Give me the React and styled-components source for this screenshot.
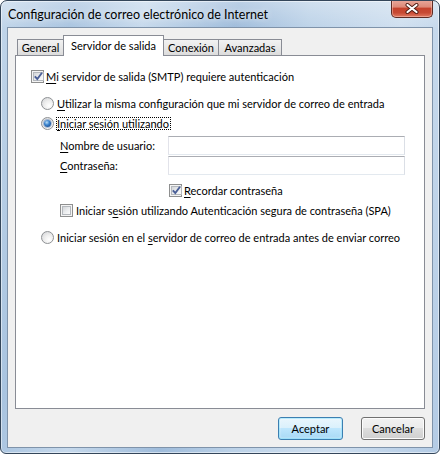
import React from 'react'
import styled, { createGlobalStyle, css } from 'styled-components'

const GlobalStyle = createGlobalStyle`
  html, body {
    margin: 0;
    padding: 0;
    background: #ffffff;
  }
  body {
    font-family: Lato, "Liberation Sans", sans-serif;
    color: #000;
  }
`

const UI_FONT = `font-family: Lato, "Liberation Sans", sans-serif; font-size: 11px;`

const Window = styled.div`
  box-sizing: border-box;
  width: 440px;
  height: 454px;
  display: flex;
  flex-direction: column;
  border: 1px solid #34465a;
  border-radius: 7px 7px 6px 6px;
  overflow: hidden;
  background:
    linear-gradient(180deg, rgba(255, 255, 255, 0.3), rgba(255, 255, 255, 0) 28px),
    linear-gradient(
      100deg,
      #c2d6ea 0%,
      #a9c4e0 14%,
      #c6d9ec 28%,
      #9fbcdb 46%,
      #bcd2e8 60%,
      #cfdfef 78%,
      #b3cbe5 100%
    );
  box-shadow: inset 0 0 0 1px rgba(255, 255, 255, 0.5);
`

const TitleBar = styled.div`
  flex: none;
  height: 26px;
  display: flex;
  align-items: center;
  padding-left: 7px;
`

const Title = styled.span`
  font-family: Lato, "Liberation Sans", sans-serif;
  font-size: 12.5px;
  color: #000;
  text-shadow: 0 0 6px rgba(255, 255, 255, 0.9);
`

const CloseButton = styled.div`
  box-sizing: border-box;
  align-self: flex-start;
  margin: -1px 6px 0 auto;
  width: 42px;
  height: 18px;
  display: flex;
  align-items: center;
  justify-content: center;
  border: 1px solid #5d2b24;
  border-top: none;
  border-radius: 0 0 5px 5px;
  background: linear-gradient(
    180deg,
    #e9a99c 0%,
    #de8a79 40%,
    #c5432d 50%,
    #c74a34 75%,
    #e07a62 100%
  );
  box-shadow: inset 0 0 0 1px rgba(255, 210, 200, 0.45);
`

const Client = styled.div`
  flex: 1;
  box-sizing: border-box;
  margin: 0 6px 5px 6px;
  padding: 7px 7px 0 7px;
  border: 1px solid #7f93aa;
  background: #f0f0f0;
  display: flex;
  flex-direction: column;
`

const TabStrip = styled.div`
  height: 20px;
  display: flex;
  align-items: flex-start;
  padding-left: 2px;
`

const Tab = styled.div`
  box-sizing: border-box;
  width: ${(p) => p.$w}px;
  margin-left: -1px;
  &:first-child {
    margin-left: 0;
  }
  display: flex;
  align-items: center;
  justify-content: center;
  ${UI_FONT}
  color: #000;
  border: 1px solid #898c95;
  border-bottom: none;
  ${(p) =>
    p.$active
      ? css`
          position: relative;
          z-index: 1;
          height: 21px;
          background: #ffffff;
          padding-bottom: 1px;
        `
      : css`
          margin-top: 4px;
          height: 16px;
          background: linear-gradient(180deg, #f2f2f2 0%, #e8e8e8 50%, #dcdcdc 100%);
        `}
`

const Panel = styled.div`
  box-sizing: border-box;
  height: 354px;
  border: 1px solid #898c95;
  background: #ffffff;
  display: flex;
  flex-direction: column;
  padding-top: 10px;
`

const Row = styled.div`
  height: 20px;
  display: flex;
  align-items: ${(p) => (p.$top ? 'flex-start' : 'center')};
  margin-top: ${(p) => p.$mt || 0}px;
  padding-left: ${(p) => p.$indent}px;
  gap: ${(p) => (p.$gap != null ? p.$gap : 2)}px;
  ${UI_FONT}
  color: #000;
  white-space: nowrap;
`

const Text = styled.span`
  line-height: 11px;
  border: 1px dotted ${(p) => (p.$focus ? '#000' : 'transparent')};
  padding: 0 1px 0 0;
  margin-left: -1px;
`

const Key = styled.span`
  text-decoration: underline;
  text-underline-offset: 2px;
`

const FieldLabel = styled.span`
  width: 108px;
  line-height: 19px;
`

const Input = styled.div`
  box-sizing: border-box;
  width: 237px;
  height: 19px;
  background: #ffffff;
  border: 1px solid;
  border-color: #abadb3 #dbdfe6 #e3e9ef #e2e3ea;
`

const Box = styled.span`
  box-sizing: border-box;
  flex: none;
  width: 13px;
  height: 13px;
  border: 1px solid #8e8f8f;
  background: #f4f4f4;
  padding: 1px;
  display: flex;
`

const BoxFill = styled.span`
  box-sizing: border-box;
  flex: 1;
  border: 1px solid #b4b8bd;
  background: linear-gradient(135deg, #d3d5d8 0%, #eceef0 55%, #fbfbfb 100%);
  display: flex;
  align-items: center;
  justify-content: center;
`

const Radio = styled.span`
  box-sizing: border-box;
  flex: none;
  width: 13px;
  height: 13px;
  border-radius: 50%;
  border: 1px solid #8e9194;
  background: radial-gradient(circle at 65% 70%, #ffffff 0%, #eeeeee 45%, #cfd1d4 100%);
  display: flex;
  align-items: center;
  justify-content: center;
`

const RadioDot = styled.span`
  width: 7px;
  height: 7px;
  border-radius: 50%;
  background: radial-gradient(circle at 40% 35%, #b9def8 0%, #3d85cf 40%, #1b4f92 80%, #123c75 100%);
  box-shadow: 0 0 0 1px rgba(40, 90, 160, 0.35);
`

const ButtonRow = styled.div`
  display: flex;
  justify-content: flex-end;
  gap: 18px;
  margin-top: 8px;
`

const Button = styled.div`
  box-sizing: border-box;
  width: ${(p) => p.$w}px;
  height: 23px;
  display: flex;
  align-items: center;
  justify-content: center;
  ${UI_FONT}
  color: #000;
  border-radius: 3px;
  ${(p) =>
    p.$default
      ? css`
          border: 1px solid #3c7fb1;
          background: linear-gradient(180deg, #eaf6fd 0%, #d9f0fc 50%, #bee6fd 50%, #a7d9f5 100%);
          box-shadow: inset 0 0 0 1px #48d3fb55, inset 0 0 2px 1px #ffffff88;
        `
      : css`
          border: 1px solid #707070;
          background: linear-gradient(180deg, #f2f2f2 0%, #ebebeb 50%, #dddddd 50%, #cfcfcf 100%);
          box-shadow: inset 0 0 0 1px #fcfcfc;
        `}
`

function Check({ checked }) {
  return (
    <Box>
      <BoxFill>
        {checked && (
          <svg width="9" height="9" viewBox="0 0 9 9" style={{ overflow: 'visible' }}>
            <path d="M0.8 4.4 L3.3 7 L8 0.8" fill="none" stroke="#4a5f97" strokeWidth="1.9" />
          </svg>
        )}
      </BoxFill>
    </Box>
  )
}

function Option({ checked }) {
  return <Radio>{checked && <RadioDot />}</Radio>
}

const tabs = [
  { label: 'General', w: 47 },
  { label: 'Servidor de salida', w: 101, active: true },
  { label: 'Conexión', w: 56 },
  { label: 'Avanzadas', w: 64 },
]

export default function App() {
  return (
    <>
      <GlobalStyle />
      <Window>
        <TitleBar>
          <Title>Configuración de correo electrónico de Internet</Title>
          <CloseButton>
            <svg width="14" height="11" viewBox="0 0 14 11">
              <path d="M2.5 2 L11.5 9 M11.5 2 L2.5 9" stroke="#4d1a12" strokeWidth="4" strokeLinecap="round" />
              <path d="M2.5 2 L11.5 9 M11.5 2 L2.5 9" stroke="#ffffff" strokeWidth="2.2" strokeLinecap="round" />
            </svg>
          </CloseButton>
        </TitleBar>
        <Client>
          <TabStrip>
            {tabs.map((t) => (
              <Tab key={t.label} $w={t.w} $active={t.active}>
                {t.label}
              </Tab>
            ))}
          </TabStrip>
          <Panel>
            <Row $indent={15}>
              <Check checked />
              <Text>
                <Key>M</Key>i servidor de salida (SMTP) requiere autenticación
              </Text>
            </Row>
            <Row $indent={25} $mt={7} $gap={3}>
              <Option />
              <Text>
                <Key>U</Key>tilizar la misma configuración que mi servidor de correo de entrada
              </Text>
            </Row>
            <Row $indent={25} $gap={3}>
              <Option checked />
              <Text $focus>
                <Key>I</Key>niciar sesión utilizando
              </Text>
            </Row>
            <Row $indent={44} $mt={3} $gap={0} $top>
              <FieldLabel>
                <Key>N</Key>ombre de usuario:
              </FieldLabel>
              <Input />
            </Row>
            <Row $indent={44} $gap={0} $top>
              <FieldLabel>
                <Key>C</Key>ontraseña:
              </FieldLabel>
              <Input />
            </Row>
            <Row $indent={153} $mt={4}>
              <Check checked />
              <Text>
                <Key>R</Key>ecordar contraseña
              </Text>
            </Row>
            <Row $indent={44} $gap={3}>
              <Check />
              <Text>
                Iniciar s<Key>e</Key>sión utilizando Autenticación segura de contraseña (SPA)
              </Text>
            </Row>
            <Row $indent={25} $mt={7} $gap={3}>
              <Option />
              <Text>
                Iniciar sesión en el <Key>s</Key>ervidor de correo de entrada antes de enviar correo
              </Text>
            </Row>
          </Panel>
          <ButtonRow>
            <Button $w={65} $default>
              Aceptar
            </Button>
            <Button $w={64}>Cancelar</Button>
          </ButtonRow>
        </Client>
      </Window>
    </>
  )
}
